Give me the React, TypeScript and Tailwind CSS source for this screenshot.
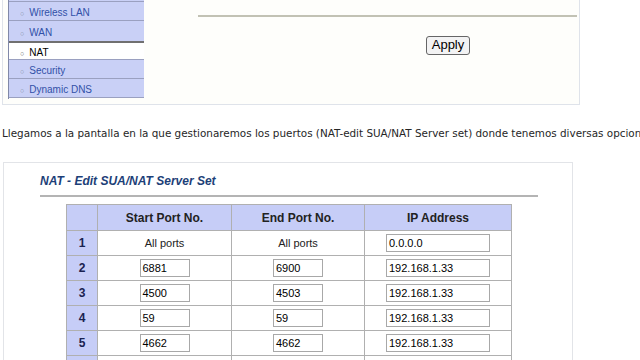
import React from "react";

const arial = { fontFamily: '"Liberation Sans", Arial, sans-serif' };

function SideItem({ label, active, h }: { label: string; active?: boolean; h: string }) {
  return (
    <div
      className={`${h} flex items-center pt-[4px] border-b border-[#9aa0c0] ${active ? "bg-white text-black" : "bg-[#c9d0f6] text-[#3150a8]"}`}
    >
      <span className="ml-[11px] mr-[5px] text-[7px] text-[#8890a8] leading-none">○</span>
      <span className="text-[10px] leading-none">{label}</span>
    </div>
  );
}

function Box({ v, w }: { v: string; w: string }) {
  return (
    <div className={`${w} h-[18px] mx-auto border border-[#a8a8a8] bg-white flex items-center pl-[2px] text-[11px] text-black`}>
      {v}
    </div>
  );
}

const rows: [string, string | null, string | null, string][] = [
  ["1", null, null, "0.0.0.0"],
  ["2", "6881", "6900", "192.168.1.33"],
  ["3", "4500", "4503", "192.168.1.33"],
  ["4", "59", "59", "192.168.1.33"],
  ["5", "4662", "4662", "192.168.1.33"],
];

export default function App() {
  return (
    <div className="w-[640px] h-[360px] overflow-hidden bg-white" style={arial}>
      {/* top panel */}
      <div className="ml-[2px] w-[578px] h-[105px] border-l border-r border-b border-[#dfe3ea] bg-[#fefefb] flex">
        <div className="ml-[5px] w-[136px] h-[99px] border-l border-[#8088a8] flex flex-col">
          <div className="h-[2px] bg-[#c9d0f6] border-b border-[#9aa0c0]" />
          <SideItem label="Wireless LAN" h="h-[19px]" />
          <SideItem label="WAN" h="h-[21px]" />
          <div className="h-[19px] flex items-center pt-[4px] border-b border-[#9aa0c0] bg-white text-black border-t-2 border-t-[#707070] -mt-px">
            <span className="ml-[11px] mr-[5px] text-[7px] text-[#606060] leading-none">○</span>
            <span className="text-[10px] leading-none">NAT</span>
          </div>
          <SideItem label="Security" h="h-[19px]" />
          <SideItem label="Dynamic DNS" h="h-[19px]" />
        </div>
        <div className="flex-1 flex flex-col">
          <div className="ml-[54px] mr-[2px] mt-[15px] h-[2px] bg-[#c2c2b4]" />
          <div className="ml-[282px] mt-[15px]">
            <button className="w-[44px] h-[19px] rounded-[3px] border border-[#666] bg-[#f3f3f3] text-[13px] leading-none text-black pb-px">
              Apply
            </button>
          </div>
        </div>
      </div>

      {/* paragraph */}
      <p
        className="mt-[21px] ml-[2px] whitespace-nowrap text-[10.4px] leading-[14px] text-[#262626]"
        style={{ fontFamily: '"DejaVu Sans", Verdana, sans-serif' }}
      >
        Llegamos a la pantalla en la que gestionaremos los puertos (NAT-edit SUA/NAT Server set) donde tenemos diversas opciones
      </p>

      {/* second panel */}
      <div className="mt-[22px] ml-[3px] w-[570px] h-[220px] border border-[#e2e4e8] border-b-0 bg-white">
        <div className="ml-[36px] mt-[10px] text-[12px] leading-[16px] font-bold italic text-[#1d3f78]">
          NAT - Edit SUA/NAT Server Set
        </div>
        <div className="ml-[36px] mt-[6px] w-[498px] h-[2px] bg-[#b4b4b4]" />
        <table className="ml-[62px] mt-[7px] border-collapse table-fixed text-[#222]">
          <colgroup>
            <col className="w-[31px]" />
            <col className="w-[134px]" />
            <col className="w-[133px]" />
            <col className="w-[147px]" />
          </colgroup>
          <thead>
            <tr className="h-[26px] bg-[#c6cdf7]">
              <th className="border border-[#b0b0b0]" />
              <th className="border border-[#b0b0b0] text-[12px] font-bold">Start Port No.</th>
              <th className="border border-[#b0b0b0] text-[12px] font-bold">End Port No.</th>
              <th className="border border-[#b0b0b0] text-[12px] font-bold">IP Address</th>
            </tr>
          </thead>
          <tbody>
            {rows.map(([n, s, e, ip]) => (
              <tr key={n} className="h-[25px]">
                <td className="border border-[#b0b0b0] bg-[#c6cdf7] text-center text-[12px] font-bold text-[#1a2250]">{n}</td>
                <td className="border border-[#b0b0b0] text-center text-[11px]">
                  {s === null ? "All ports" : <Box v={s} w="w-[50px]" />}
                </td>
                <td className="border border-[#b0b0b0] text-center text-[11px]">
                  {e === null ? "All ports" : <Box v={e} w="w-[50px]" />}
                </td>
                <td className="border border-[#b0b0b0] text-left">
                  <Box v={ip} w="w-[104px]" />
                </td>
              </tr>
            ))}
            <tr className="h-[25px]">
              <td className="border border-[#b0b0b0] bg-[#c6cdf7]" />
              <td className="border border-[#b0b0b0]" />
              <td className="border border-[#b0b0b0]" />
              <td className="border border-[#b0b0b0]" />
            </tr>
          </tbody>
        </table>
      </div>
    </div>
  );
}
